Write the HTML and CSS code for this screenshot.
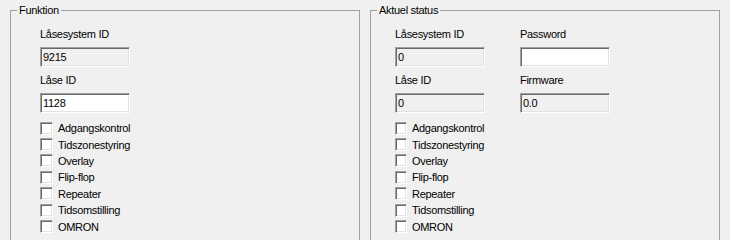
FILE: index.html
```html
<!DOCTYPE html>
<html lang="da">
<head>
  <meta charset="UTF-8" />
  <title>Lås</title>
  <link rel="stylesheet" href="styles.css">
</head>
<body>
  <div class="panels">
    <fieldset class="group group-func">
      <legend>Funktion</legend>
      <div class="group-body">
        <div class="field">
          <label>Låsesystem ID</label>
          <input type="text" class="tb readonly" value="9215" readonly>
        </div>
        <div class="field">
          <label>Låse ID</label>
          <input type="text" class="tb" value="1128">
        </div>

        <div class="checks">
          <label class="check"><input type="checkbox"><span>Adgangskontrol</span></label>
          <label class="check"><input type="checkbox"><span>Tidszonestyring</span></label>
          <label class="check"><input type="checkbox"><span>Overlay</span></label>
          <label class="check"><input type="checkbox"><span>Flip-flop</span></label>
          <label class="check"><input type="checkbox"><span>Repeater</span></label>
          <label class="check"><input type="checkbox"><span>Tidsomstilling</span></label>
          <label class="check"><input type="checkbox"><span>OMRON</span></label>
        </div>
      </div>
    </fieldset>

    <fieldset class="group group-status">
      <legend>Aktuel status</legend>
      <div class="group-body">
        <div class="field-grid">
          <div class="field">
            <label>Låsesystem ID</label>
            <input type="text" class="tb readonly" value="0" readonly>
          </div>
          <div class="field">
            <label>Password</label>
            <input type="password" class="tb" value="">
          </div>
          <div class="field">
            <label>Låse ID</label>
            <input type="text" class="tb readonly" value="0" readonly>
          </div>
          <div class="field">
            <label>Firmware</label>
            <input type="text" class="tb readonly" value="0.0" readonly>
          </div>
        </div>

        <div class="checks">
          <label class="check"><input type="checkbox"><span>Adgangskontrol</span></label>
          <label class="check"><input type="checkbox"><span>Tidszonestyring</span></label>
          <label class="check"><input type="checkbox"><span>Overlay</span></label>
          <label class="check"><input type="checkbox"><span>Flip-flop</span></label>
          <label class="check"><input type="checkbox"><span>Repeater</span></label>
          <label class="check"><input type="checkbox"><span>Tidsomstilling</span></label>
          <label class="check"><input type="checkbox"><span>OMRON</span></label>
        </div>
      </div>
    </fieldset>
  </div>
</body>
</html>
```

FILE: styles.css
```css
html, body {
  margin: 0;
  padding: 0;
  overflow: hidden;
}

body {
  font-family: "Liberation Sans", Arial, sans-serif;
  font-size: 11px;
  letter-spacing: -0.3px;
  color: #000;
  background-color: #f0f0f0;
}

.panels {
  display: flex;
  gap: 10px;
  padding: 4px 0 0 10px;
}

.group {
  box-sizing: border-box;
  width: 350px;
  height: 260px;
  margin: 0;
  padding: 0;
  border: 1px solid #a0a0a0;
}

.group legend {
  margin-left: 6px;
  padding: 0 2px;
  line-height: 13px;
}

.group-body {
  padding: 11px 0 0 29px;
}

.group-status .group-body {
  padding-left: 24px;
}

.field label {
  display: block;
  line-height: 13px;
  margin-bottom: 6px;
}

.field {
  margin-bottom: 7px;
}

.field-grid {
  display: grid;
  grid-template-columns: 90px 90px;
  column-gap: 35px;
}

.tb {
  display: block;
  box-sizing: border-box;
  width: 90px;
  height: 20px;
  margin: 0;
  padding: 0 2px;
  font-family: inherit;
  font-size: 11px;
  letter-spacing: -0.3px;
  color: #000;
  background-color: #fff;
  border: 1px solid;
  border-color: #a0a0a0 #fff #fff #a0a0a0;
  box-shadow: inset 1px 1px 0 #696969, inset -1px -1px 0 #e3e3e3;
  outline: none;
}

.tb.readonly {
  background-color: #f0f0f0;
}

.checks {
  display: flex;
  flex-direction: column;
}

.check {
  display: flex;
  align-items: center;
  height: 16.4px;
}

.check input {
  appearance: none;
  -webkit-appearance: none;
  box-sizing: border-box;
  width: 13px;
  height: 13px;
  margin: 0 5px 0 0;
  background-color: #fff;
  border: 1px solid;
  border-color: #a0a0a0 #fff #fff #a0a0a0;
  box-shadow: inset 1px 1px 0 #696969, inset -1px -1px 0 #e3e3e3;
}

.group-status .check input {
  width: 12px;
}
```
